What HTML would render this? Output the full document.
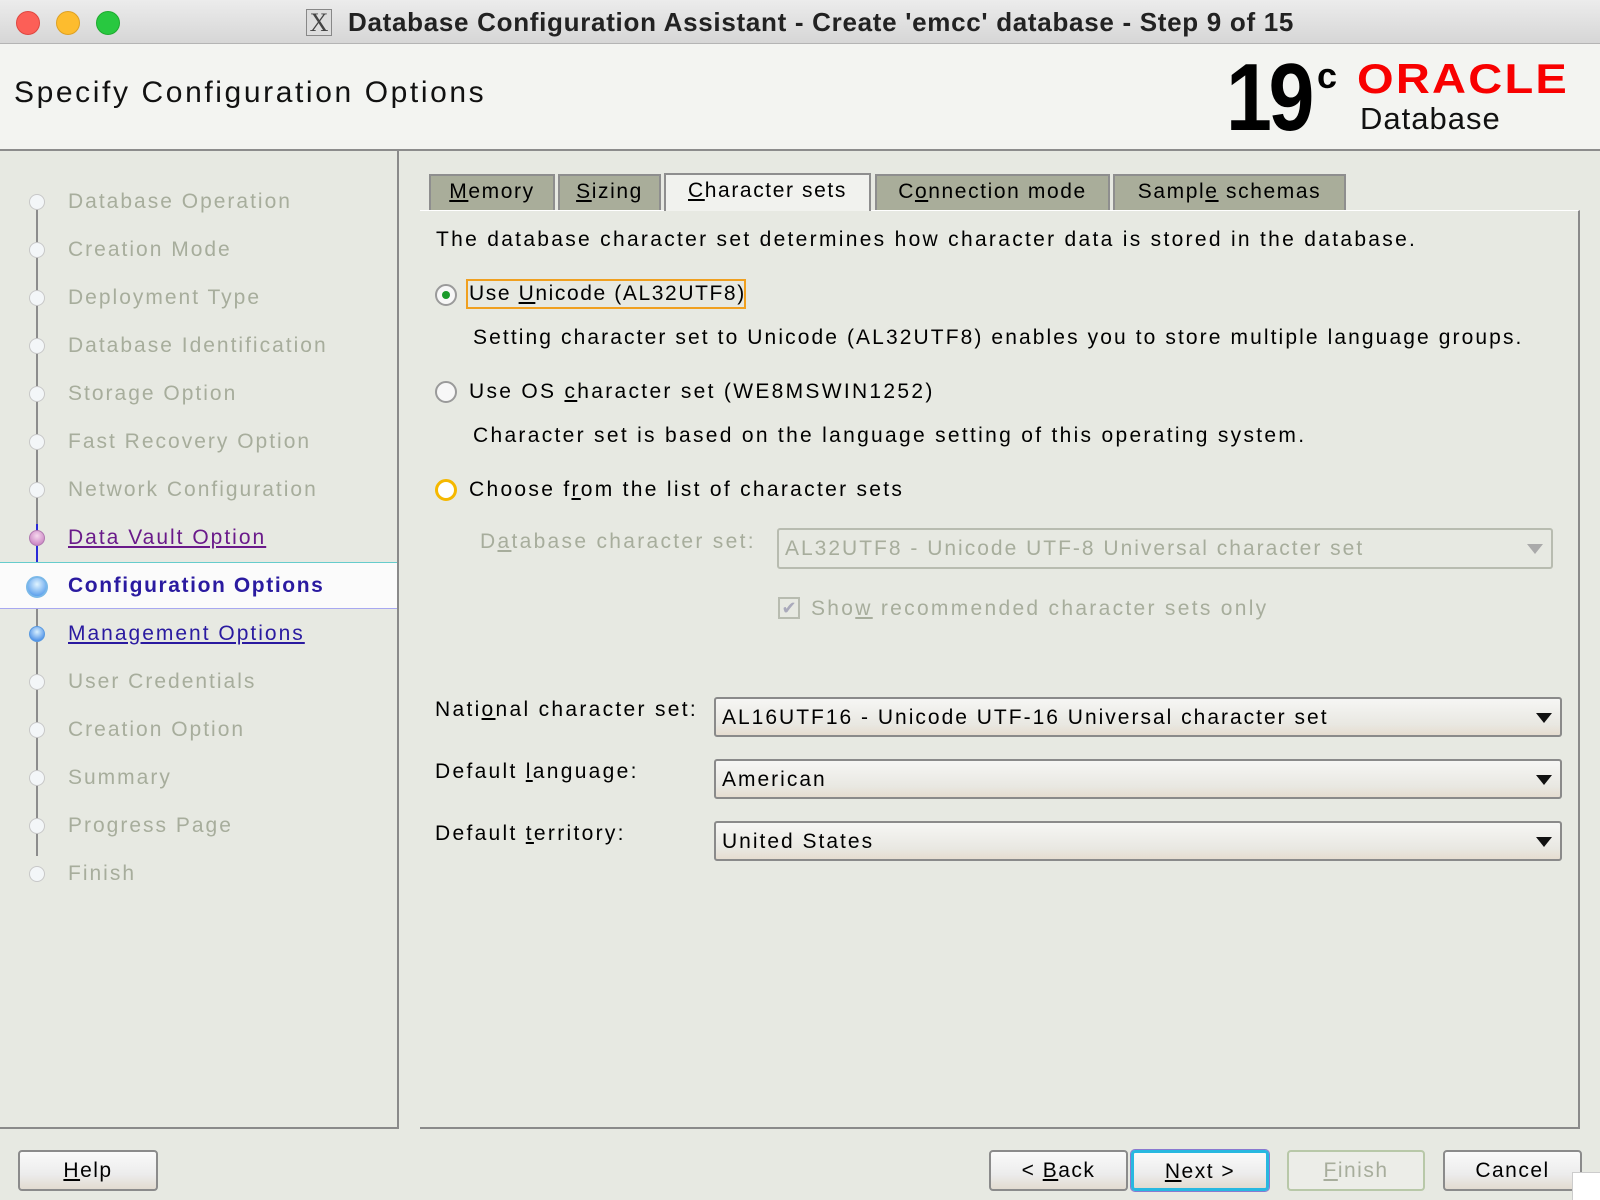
<!DOCTYPE html>
<html><head><meta charset="utf-8">
<style>
*{margin:0;padding:0;box-sizing:border-box}
body{width:1600px;height:1200px;overflow:hidden;background:#e7e9e2;font-family:"Liberation Sans","DejaVu Sans",sans-serif;position:relative;color:#000}
.a{position:absolute;white-space:nowrap}
.t{font-size:21px;letter-spacing:2.3px;line-height:24px}
.title{left:0;top:0;width:1600px;height:44px;background:linear-gradient(#ececec,#d6d6d6);border-bottom:1px solid #b4b4b4}
.dot{position:absolute;top:11px;width:24px;height:24px;border-radius:50%}
.hdr{left:0;top:44px;width:1600px;height:107px;background:#f3f4f1;border-bottom:2px solid #8c8c8c}
.left{left:0;top:151px;width:399px;height:978px;border-right:2px solid #8a8a8a;border-bottom:2px solid #8a8a8a}
.step{position:absolute;left:68px;font-size:21px;letter-spacing:2px;color:#a7ad9c;line-height:24px}
.circ{position:absolute;left:29px;width:16px;height:16px;border-radius:50%;background:#f3f6f8;border:1px solid #c8c8c8}
.vline{position:absolute;left:36px;width:2px;background:#8c8c8c}
.tab{position:absolute;top:174px;height:36px;background:#a9ad9a;border:2px solid #8e8e8e;border-bottom:none;font-size:21px;letter-spacing:1.6px;line-height:32px;text-align:center}
.panel{left:420px;top:210px;width:1160px;height:919px;border-right:2px solid #8a8a8a;border-bottom:2px solid #8a8a8a;border-top:1px solid #fff}
.radio{position:absolute;width:22px;height:22px;border-radius:50%;border:2px solid #9a9a9a;background:#f7f7f7}
.combo{position:absolute;height:40px;border:2px solid #8a8a8a;border-radius:3px;background:linear-gradient(#f6f6f4,#e9e8e2 70%,#e6ddd0);font-size:21px;letter-spacing:2px;line-height:38px;padding-left:6px}
.arr{position:absolute;right:8px;top:14px;width:0;height:0;border-left:8px solid transparent;border-right:8px solid transparent;border-top:10px solid #111}
.btn{position:absolute;top:1150px;height:41px;border:2px solid #8b8b8b;border-radius:4px;background:linear-gradient(#fafafa,#ececec 60%,#e2dbd0);font-size:21px;letter-spacing:1.5px;line-height:37px;text-align:center}
u{text-decoration:underline}
</style></head><body>
<div class="a title">
<div class="dot" style="left:16px;background:#fc5f57;border:1px solid #df4740"></div>
<div class="dot" style="left:56px;background:#fdbc2e;border:1px solid #dea123"></div>
<div class="dot" style="left:96px;background:#28c840;border:1px solid #1eab2f"></div>
<div class="a" style="left:306px;top:9px;width:26px;height:27px;border:1px solid #888;background:#ddd;font-family:'Liberation Serif',serif;font-size:26px;line-height:26px;text-align:center;color:#444">X</div>
<div class="a" style="left:348px;top:5px;font-size:26px;font-weight:bold;letter-spacing:0.7px;line-height:34px;color:#222">Database Configuration Assistant - Create 'emcc' database - Step 9 of 15</div>
</div>
<div class="a hdr">
<div class="a" style="left:14px;top:31px;font-size:30px;letter-spacing:2.6px;line-height:36px;color:#111">Specify Configuration Options</div>
<div class="a" style="left:1226px;top:6px;font-size:96px;font-weight:bold;letter-spacing:-4px;line-height:96px;transform:scaleX(0.86);transform-origin:left">19</div>
<div class="a" style="left:1317px;top:14px;font-size:36px;font-weight:bold;line-height:36px">c</div>
<div class="a" style="left:1357px;top:14px;font-size:42px;font-weight:bold;color:#f80000;letter-spacing:2px;line-height:42px;transform:scaleX(1.12);transform-origin:left">ORACLE</div>
<div class="a" style="left:1360px;top:58px;font-size:31px;letter-spacing:1px;line-height:34px;color:#111">Database</div>
</div>

<div class="a left">
<div class="vline" style="top:51px;height:322px"></div>
<div class="vline" style="top:373px;height:62px;background:#2a2ad8"></div>
<div class="vline" style="top:435px;height:270px"></div>
<div style="position:absolute;left:0;top:411px;width:397px;height:47px;background:#fbfbfb;border-top:1px solid #6cc;border-bottom:1px solid #a8a8f0"></div>
</div>
<div class="circ" style="top:194px"></div><div class="step" style="top:190px">Database Operation</div>
<div class="circ" style="top:242px"></div><div class="step" style="top:238px">Creation Mode</div>
<div class="circ" style="top:290px"></div><div class="step" style="top:286px">Deployment Type</div>
<div class="circ" style="top:338px"></div><div class="step" style="top:334px">Database Identification</div>
<div class="circ" style="top:386px"></div><div class="step" style="top:382px">Storage Option</div>
<div class="circ" style="top:434px"></div><div class="step" style="top:430px">Fast Recovery Option</div>
<div class="circ" style="top:482px"></div><div class="step" style="top:478px">Network Configuration</div>
<div class="circ" style="top:530px;background:radial-gradient(circle at 50% 35%,#f6d8ee,#c070b8);border-color:#b07ab0"></div><div class="step" style="top:526px;color:#6a1a8a"><u>Data Vault Option</u></div>
<div class="circ" style="top:576px;left:26px;width:22px;height:22px;background:radial-gradient(circle at 50% 35%,#e0f4ff,#3a8ae8);border:2px solid #7ab8e8"></div><div class="step" style="top:574px;color:#2a1aa0;font-weight:bold;letter-spacing:1.6px">Configuration Options</div>
<div class="circ" style="top:626px;background:radial-gradient(circle at 50% 35%,#d8f0ff,#2a78e0);border-color:#5a9ae0"></div><div class="step" style="top:622px;color:#2a1aa0"><u>Management Options</u></div>
<div class="circ" style="top:674px"></div><div class="step" style="top:670px">User Credentials</div>
<div class="circ" style="top:722px"></div><div class="step" style="top:718px">Creation Option</div>
<div class="circ" style="top:770px"></div><div class="step" style="top:766px">Summary</div>
<div class="circ" style="top:818px"></div><div class="step" style="top:814px">Progress Page</div>
<div class="circ" style="top:866px"></div><div class="step" style="top:862px">Finish</div>

<div class="a panel"></div>
<div class="tab" style="left:429px;width:126px"><u>M</u>emory</div>
<div class="tab" style="left:558px;width:103px"><u>S</u>izing</div>
<div class="tab" style="left:664px;width:207px;height:38px;background:#f1f2ee;top:173px"><u>C</u>haracter sets</div>
<div class="tab" style="left:875px;width:235px">C<u>o</u>nnection mode</div>
<div class="tab" style="left:1113px;width:233px">Sampl<u>e</u> schemas</div>

<div class="a t" style="left:436px;top:228px">The database character set determines how character data is stored in the database.</div>
<div class="radio" style="left:435px;top:284px"></div><div class="a" style="left:442px;top:291px;width:8px;height:8px;border-radius:50%;background:#1a9a2a"></div>
<div class="a" style="left:466px;top:279px;width:280px;height:30px;border:2px solid #f0a020"></div>
<div class="a t" style="left:469px;top:282px;letter-spacing:1.6px">Use <u>U</u>nicode (AL32UTF8)</div>
<div class="a t" style="left:473px;top:326px;letter-spacing:2.1px">Setting character set to Unicode (AL32UTF8) enables you to store multiple language groups.</div>
<div class="radio" style="left:435px;top:381px"></div>
<div class="a t" style="left:469px;top:380px">Use OS <u>c</u>haracter set (WE8MSWIN1252)</div>
<div class="a t" style="left:473px;top:424px">Character set is based on the language setting of this operating system.</div>
<div class="radio" style="left:435px;top:479px;border:3px solid #f5b800;background:#fff"></div>
<div class="a t" style="left:469px;top:478px">Choose f<u>r</u>om the list of character sets</div>
<div class="a t" style="left:480px;top:530px;color:#a7ad9c">D<u>a</u>tabase character set:</div>
<div class="a" style="left:777px;top:528px;width:776px;height:41px;border:2px solid #b8bcb0;border-radius:3px;font-size:21px;letter-spacing:2px;line-height:38px;padding-left:6px;color:#a7ad9c">AL32UTF8 - Unicode UTF-8 Universal character set<div class="arr" style="border-top-color:#aaa"></div></div>
<div class="a" style="left:778px;top:597px;width:22px;height:22px;border:2px solid #b8bcb0;color:#aab;font-size:18px;line-height:18px;text-align:center">✔</div>
<div class="a t" style="left:811px;top:597px;color:#a7ad9c">Sho<u>w</u> recommended character sets only</div>

<div class="a t" style="left:435px;top:698px">Nati<u>o</u>nal character set:</div>
<div class="combo" style="left:714px;top:697px;width:848px">AL16UTF16 - Unicode UTF-16 Universal character set<div class="arr"></div></div>
<div class="a t" style="left:435px;top:760px">Default <u>l</u>anguage:</div>
<div class="combo" style="left:714px;top:759px;width:848px">American<div class="arr"></div></div>
<div class="a t" style="left:435px;top:822px">Default <u>t</u>erritory:</div>
<div class="combo" style="left:714px;top:821px;width:848px">United States<div class="arr"></div></div>

<div class="btn" style="left:18px;width:140px"><u>H</u>elp</div>
<div class="btn" style="left:989px;width:139px">&lt; <u>B</u>ack</div>
<div class="btn" style="left:1131px;width:138px;border:3px solid #28b8e0;outline:1px solid #8a7ad0"><u>N</u>ext &gt;</div>
<div class="btn" style="left:1287px;width:138px;border-color:#b8c8a8;color:#a7ad9c;background:#ecede8"><u>F</u>inish</div>
<div class="btn" style="left:1443px;width:139px">Cancel</div>
<div class="a" style="left:1572px;top:1172px;width:28px;height:28px;background:#fff;border-left:1px solid #ccc;border-top:1px solid #ccc"></div>
</body></html>
